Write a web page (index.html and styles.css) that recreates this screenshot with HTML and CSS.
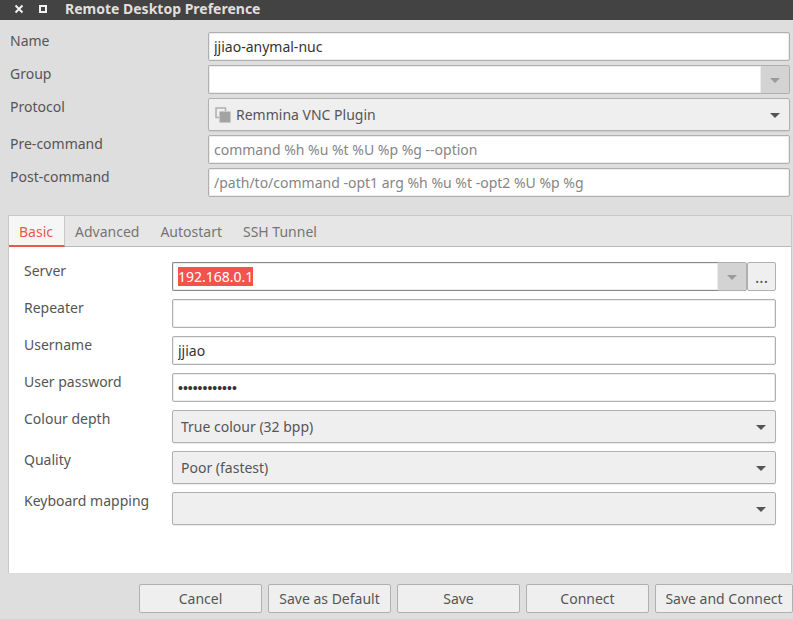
FILE: index.html
```html
<!DOCTYPE html>
<html lang="en">
<head>
<meta charset="utf-8">
<title>Remote Desktop Preference</title>
<link rel="stylesheet" href="styles.css">
</head>
<body>
<header class="titlebar">
  <button class="window-button" type="button" aria-label="Close"><svg width="10" height="10" viewBox="0 0 10 10"><path d="M1.5 1.5L8.5 8.5M8.5 1.5L1.5 8.5" stroke="currentColor" stroke-width="2"/></svg></button>
  <button class="window-button" type="button" aria-label="Maximize"><svg width="10" height="10" viewBox="0 0 10 10"><path d="M2 2H8V8H2Z" fill="none" stroke="currentColor" stroke-width="2"/></svg></button>
  <h1 class="title">Remote Desktop Preference</h1>
</header>
<form class="dialog">
  <div class="form profile">
    <label for="name">Name</label>
    <input class="field" id="name" type="text" value="jjiao-anymal-nuc">
    <label for="group">Group</label>
    <div class="combo">
      <input class="field" id="group" type="text">
      <button class="combo-button" type="button" aria-label="Choose group" disabled><svg width="10" height="6" viewBox="0 0 10 6"><path d="M0 1H10L5 6Z" fill="currentColor"/></svg></button>
    </div>
    <label for="protocol">Protocol</label>
    <div class="select with-icon">
      <select id="protocol"><option>Remmina VNC Plugin</option></select>
      <svg class="icon" width="16" height="16" viewBox="0 0 16 16"><path d="M4 10.500H1V1H10.500V4" fill="none" stroke="#b0b0b0" stroke-width="1.500"/><path d="M4.500 4.500H15.500V15.500H4.500Z" fill="#a3a3a3"/></svg>
      <svg class="arrow" width="10" height="6" viewBox="0 0 10 6"><path d="M0 1H10L5 6Z" fill="currentColor"/></svg>
    </div>
    <label for="pre">Pre-command</label>
    <input class="field" id="pre" type="text" placeholder="command %h %u %t %U %p %g --option">
    <label for="post">Post-command</label>
    <input class="field" id="post" type="text" placeholder="/path/to/command -opt1 arg %h %u %t -opt2 %U %p %g">
  </div>

  <section class="notebook">
    <nav class="tabs" role="tablist">
      <button class="tab active" type="button" role="tab" aria-selected="true">Basic</button>
      <button class="tab" type="button" role="tab">Advanced</button>
      <button class="tab" type="button" role="tab">Autostart</button>
      <button class="tab" type="button" role="tab">SSH Tunnel</button>
    </nav>
    <div class="form settings">
      <label for="server">Server</label>
      <div class="server-row">
        <div class="combo">
          <input class="field" id="server" type="text" value="192.168.0.1">
          <button class="combo-button" type="button" aria-label="Recent servers" disabled><svg width="10" height="6" viewBox="0 0 10 6"><path d="M0 1H10L5 6Z" fill="currentColor"/></svg></button>
        </div>
        <button class="button browse" type="button" aria-label="Browse servers">...</button>
      </div>
      <label for="repeater">Repeater</label>
      <input class="field" id="repeater" type="text">
      <label for="username">Username</label>
      <input class="field" id="username" type="text" value="jjiao">
      <label for="password">User password</label>
      <input class="field" id="password" type="password" value="secretsecret">
      <label for="depth">Colour depth</label>
      <div class="select">
        <select id="depth"><option>True colour (32 bpp)</option></select>
        <svg class="arrow" width="10" height="6" viewBox="0 0 10 6"><path d="M0 1H10L5 6Z" fill="currentColor"/></svg>
      </div>
      <label for="quality">Quality</label>
      <div class="select">
        <select id="quality"><option>Poor (fastest)</option></select>
        <svg class="arrow" width="10" height="6" viewBox="0 0 10 6"><path d="M0 1H10L5 6Z" fill="currentColor"/></svg>
      </div>
      <label for="keyboard">Keyboard mapping</label>
      <div class="select">
        <select id="keyboard"><option></option></select>
        <svg class="arrow" width="10" height="6" viewBox="0 0 10 6"><path d="M0 1H10L5 6Z" fill="currentColor"/></svg>
      </div>
    </div>
  </section>

  <footer class="actions">
    <button class="button" type="button">Cancel</button>
    <button class="button" type="button">Save as Default</button>
    <button class="button" type="button">Save</button>
    <button class="button" type="button">Connect</button>
    <button class="button" type="button">Save and Connect</button>
  </footer>
</form>
<script src="script.js"></script>
</body>
</html>
```
FILE: styles.css
```css
* { box-sizing: border-box; }

body {
  margin: 0;
  min-height: 100vh;
  display: flex;
  flex-direction: column;
  background: #dedede;
  color: #555;
  font: 14px/18px "Noto Sans", sans-serif;
}

button, input, select { font: inherit; color: inherit; margin: 0; }
svg { display: block; }

.titlebar {
  display: flex;
  align-items: center;
  height: 20px;
  padding: 0 14px 2px;
  background: #434343;
  color: #e0dfdb;
}
.window-button {
  width: 24px;
  padding: 0;
  border: 0;
  background: none;
  color: #f2f2f2;
}
.title { margin: 0 0 0 3px; font-size: 14px; line-height: 18px; }

.dialog { flex: 1; display: flex; flex-direction: column; }

.form { display: grid; align-items: start; }
.profile {
  grid-template-columns: 198px 1fr;
  row-gap: 4px;
  padding: 12px 3px 18px 10px;
}
.settings {
  flex: 1;
  grid-template-columns: 148px 1fr;
  align-content: start;
  row-gap: 8px;
  padding: 15px;
}

.field {
  width: 100%;
  min-width: 0;
  height: 29px;
  padding: 0 5px;
  border: 1px solid #b0b0b0;
  border-radius: 2px;
  background: #fff;
  box-shadow: inset 0 0 0 1px #ececec;
  color: #333;
  outline: none;
}
.field::placeholder { color: #858585; opacity: 1; }
.field::selection { background: #f2544d; color: #fff; }
#password { font-family: "Liberation Sans", sans-serif; }

.combo { display: flex; flex: 1; }
.combo .field { border-right: 0; border-radius: 2px 0 0 2px; }
.combo-button {
  display: grid;
  place-items: center;
  flex: none;
  width: 29px;
  padding: 0;
  border: 1px solid #b0b0b0;
  border-left: 0;
  border-radius: 0 2px 2px 0;
  background: #d3d3d3;
  color: #9a9a9a;
}
.combo .field:focus { border-color: #888; }

.select { display: grid; align-items: center; }
.select > * { grid-area: 1 / 1; }
.select select {
  appearance: none;
  width: 100%;
  height: 33px;
  padding: 0 30px 0 8px;
  border: 1px solid #b0b0b0;
  border-radius: 2px;
  background: #efefef;
  box-shadow: 0 1px 1px rgba(0, 0, 0, 0.08);
}
.with-icon select { padding-left: 27px; }
.icon { margin-left: 7px; pointer-events: none; }
.arrow { justify-self: end; margin-right: 10px; pointer-events: none; }

.notebook {
  flex: 1;
  display: flex;
  flex-direction: column;
  margin: 0 1px 0 8px;
  border: 1px solid #c8c8c8;
  border-bottom: 0;
  background: #fff;
}
.tabs {
  display: flex;
  height: 31px;
  border-bottom: 1px solid #b8b8b8;
  background: #e6e6e6;
}
.tab {
  height: 31px;
  padding: 0 11px 0 10px;
  border: 0;
  background: none;
  color: #757575;
}
.tab.active {
  padding-top: 2px;
  border-right: 1px solid #c8c8c8;
  border-bottom: 2px solid #f2544d;
  background: #f6f6f6;
  color: #f2544d;
}

.server-row { display: flex; }

.button {
  height: 29px;
  padding: 0 9px;
  border: 1px solid #b0b0b0;
  border-radius: 2px;
  background: #efefef;
  white-space: nowrap;
}
.browse { width: 29px; padding: 0; font-size: 16px; }

.actions {
  display: flex;
  justify-content: flex-end;
  gap: 6px;
  padding: 11px 0 6px;
}
.actions .button { min-width: 123px; }
.actions .button:last-child { min-width: 138px; }
```
FILE: script.js
```js
document.getElementById("server").select();
```
